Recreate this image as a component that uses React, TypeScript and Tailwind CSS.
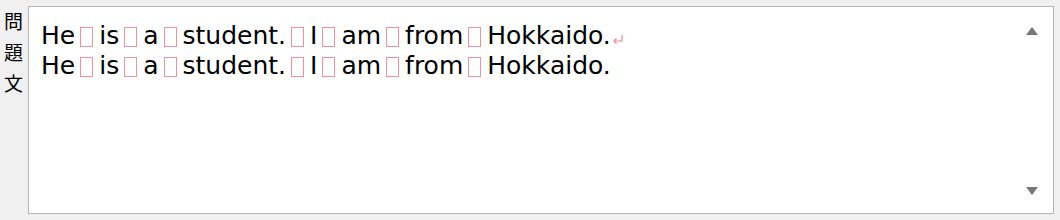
import React from "react";

type Props = { line: string; mark?: boolean };

const Zen = () => (
  <span className="inline-block w-[24px] h-[30px] align-top pt-[6px] pl-[5px]">
    <span className="block w-[13px] h-[20px] border border-[#ee939b]" />
  </span>
);

const ReturnMark = () => (
  <svg width="12" height="10" viewBox="0 0 12 10" className="inline-block align-baseline ml-[1px]">
    <path d="M10 0.5 V7 H2" fill="none" stroke="#ef8690" strokeWidth="1.2" />
    <path d="M4.5 4.5 L2 7 L4.5 9.5" fill="none" stroke="#ef8690" strokeWidth="1.2" />
  </svg>
);

const Line = ({ line, mark }: Props) => {
  const parts = line.split("\u3000");
  return (
    <div className="h-[30px] leading-[30px] whitespace-pre">
      {parts.map((p, i) => (
        <React.Fragment key={i}>
          {i > 0 && <Zen />}
          {p}
        </React.Fragment>
      ))}
      {mark && <ReturnMark />}
    </div>
  );
};

export default function App() {
  const text = "He\u3000is\u3000a\u3000student.\u3000I\u3000am\u3000from\u3000Hokkaido.";
  return (
    <div className="w-[1060px] h-[220px] bg-[#f0f0f0] flex overflow-hidden">
      {/* label */}
      <div className="w-[28px] pl-[4px] pt-[5px] flex flex-col text-[19px] leading-[31px] text-black font-['Noto_Sans_CJK_JP',sans-serif]">
        <span>問</span>
        <span>題</span>
        <span>文</span>
      </div>
      {/* text box */}
      <div className="mt-[6px] h-[208px] w-[1026px] border border-[#b4b4b4] bg-white flex">
        <div className="flex-1 pl-[12px] pt-[14px] text-[25px] text-black font-['DejaVu_Sans',sans-serif]">
          <Line line={text} mark />
          <Line line={text} />
        </div>
        <div className="w-[27px] flex flex-col justify-between items-start pt-[20px] pb-[18px]">
          <svg width="12" height="8" viewBox="0 0 12 8">
            <path d="M6 0 L12 8 H0 Z" fill="#777777" />
          </svg>
          <svg width="12" height="8" viewBox="0 0 12 8">
            <path d="M0 0 H12 L6 8 Z" fill="#777777" />
          </svg>
        </div>
      </div>
    </div>
  );
}
